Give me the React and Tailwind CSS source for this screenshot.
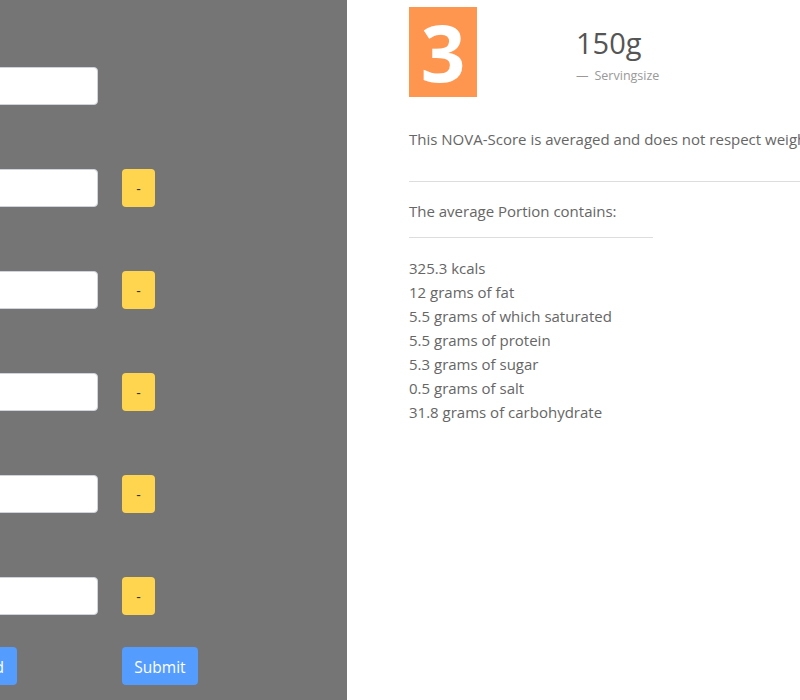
// App.jsx
const font = { fontFamily: '"Open Sans", "Noto Sans", sans-serif' };

const nutrients = [
  "325.3 kcals",
  "12 grams of fat",
  "5.5 grams of which saturated",
  "5.5 grams of protein",
  "5.3 grams of sugar",
  "0.5 grams of salt",
  "31.8 grams of carbohydrate",
];

function FieldRow({ removable }) {
  return (
    <div className="flex items-center">
      <input
        type="text"
        className="w-[200px] h-[38px] rounded-[4px] border border-[#ced4da] bg-white px-3"
      />
      {removable && (
        <button className="ml-[24px] w-[33px] h-[38px] rounded-[4px] bg-[#ffd54f] text-[#333] text-[14px]">
          -
        </button>
      )}
    </div>
  );
}

export default function App() {
  return (
    <div
      className="flex w-[800px] h-[700px] overflow-hidden bg-white"
      style={font}
    >
      {/* left form panel */}
      <div className="w-[347px] shrink-0 h-full bg-[#757575] overflow-hidden">
        <div className="ml-[-102px] pt-[67px] flex flex-col gap-[64px]">
          <FieldRow />
          <FieldRow removable />
          <FieldRow removable />
          <FieldRow removable />
          <FieldRow removable />
          <FieldRow removable />
        </div>
        <div className="ml-[-102px] mt-[32px] flex items-center">
          <div className="w-[200px] flex justify-end pr-[81px]">
            <button className="h-[38px] px-[13px] pt-[3px] rounded-[4px] bg-[#559cff] text-white text-[15.5px] whitespace-nowrap">
              Add
            </button>
          </div>
          <button className="ml-[24px] h-[38px] w-[76px] pt-[3px] rounded-[4px] bg-[#559cff] text-white text-[15.5px]">
            Submit
          </button>
        </div>
      </div>

      {/* right result panel */}
      <div className="flex-1 pl-[62px] text-[#666] overflow-hidden">
        <div className="mt-[-17px] h-[24px] text-[20px] font-bold tracking-[6px] text-[#aaa] leading-[20px]">
          NOVA
        </div>
        <div className="flex items-start">
          <div className="w-[68px] h-[90px] bg-[#ff964f] flex items-center justify-center text-white text-[78px] font-bold leading-[80px]">
            3
          </div>
          <div className="ml-[99px] mt-[18px]">
            <div className="text-[29px] leading-[36px] text-[#555]">150g</div>
            <div className="mt-[6px] text-[12.5px] text-[#999] whitespace-nowrap">
              <span className="mr-[6px]">—</span>Servingsize
            </div>
          </div>
        </div>
        <p className="mt-[30px] text-[15px] leading-[24px] whitespace-nowrap">
          This NOVA-Score is averaged and does not respect weight of the products.
        </p>
        <hr className="mt-[30px] border-[#ddd] w-[600px]" />
        <div className="mt-[17px] text-[15px] leading-[24px]">The average Portion contains:</div>
        <hr className="mt-[14px] border-[#ddd] w-[244px]" />
        <ul className="mt-[18px] text-[15px] leading-[24px]">
          {nutrients.map((n) => (
            <li key={n}>{n}</li>
          ))}
        </ul>
      </div>
    </div>
  );
}
